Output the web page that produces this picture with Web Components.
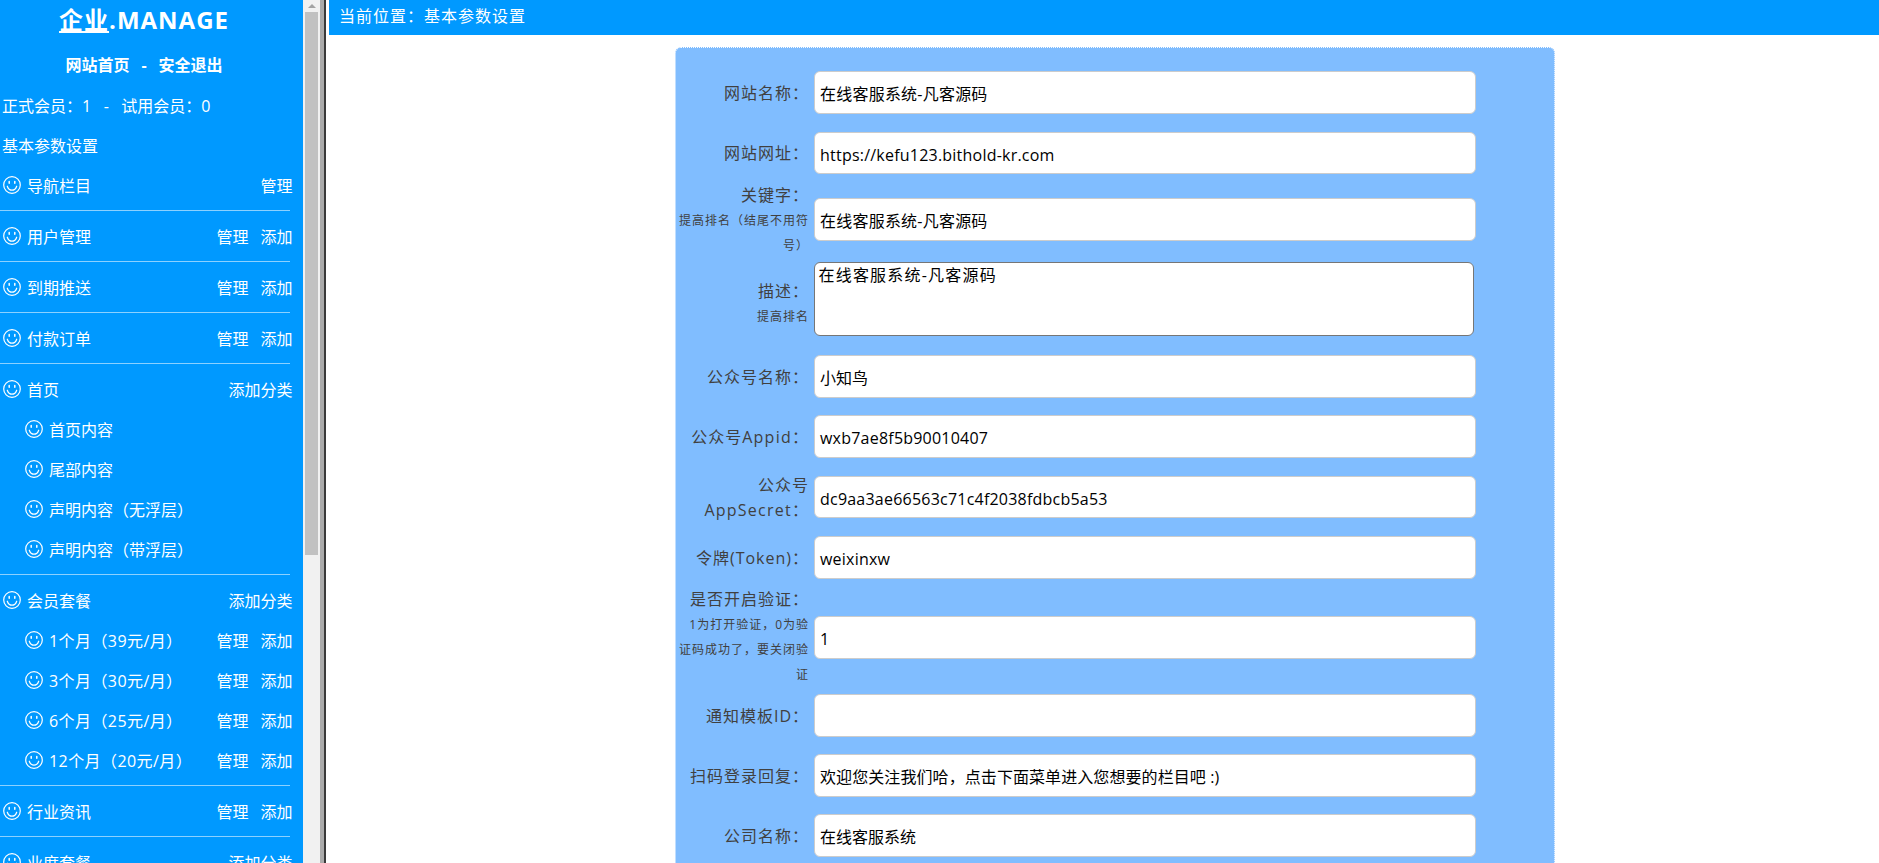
<!DOCTYPE html>
<html lang="zh"><head><meta charset="utf-8"><title>基本参数设置</title>
<style>
html,body{margin:0;height:863px;overflow:hidden;background:#fff}
body{font:16px/25px "Open Sans","Noto Sans CJK SC",sans-serif;display:flex}
.lat{letter-spacing:1.25px}
</style></head><body>
<app-sidebar>
  <side-title></side-title>
  <side-line center bold><span>网站首页</span><span style="margin:0 12px">-</span><span>安全退出</span></side-line>
  <side-line>正式会员：1<span style="margin:0 12.5px">-</span>试用会员：0</side-line>
  <side-line>基本参数设置</side-line>
  <nav-row actions="管理">导航栏目</nav-row><side-rule></side-rule>
  <nav-row actions="管理,添加">用户管理</nav-row><side-rule></side-rule>
  <nav-row actions="管理,添加">到期推送</nav-row><side-rule></side-rule>
  <nav-row actions="管理,添加">付款订单</nav-row><side-rule></side-rule>
  <nav-row actions="添加分类">首页</nav-row>
  <nav-row sub>首页内容</nav-row>
  <nav-row sub>尾部内容</nav-row>
  <nav-row sub>声明内容（无浮层）</nav-row>
  <nav-row sub>声明内容（带浮层）</nav-row><side-rule></side-rule>
  <nav-row actions="添加分类">会员套餐</nav-row>
  <nav-row sub track actions="管理,添加">1个月（39元/月）</nav-row>
  <nav-row sub track actions="管理,添加">3个月（30元/月）</nav-row>
  <nav-row sub track actions="管理,添加">6个月（25元/月）</nav-row>
  <nav-row sub track actions="管理,添加">12个月（20元/月）</nav-row><side-rule></side-rule>
  <nav-row actions="管理,添加">行业资讯</nav-row><side-rule></side-rule>
  <nav-row actions="添加分类">业度套餐</nav-row>
</app-sidebar>
<fake-scrollbar></fake-scrollbar>
<frame-edge></frame-edge>
<app-main>
  <top-bar>当前位置：基本参数设置</top-bar>
  <form-panel>
    <form-row track="l" value="在线客服系统-凡客源码">网站名称：</form-row>
    <form-row track="l" value="https://kefu123.bithold-kr.com">网站网址：</form-row>
    <form-row track="l" note value="在线客服系统-凡客源码">关键字：<small slot="note">提高排名（结尾不用符号）</small></form-row>
    <form-row note multiline value="在线客服系统-凡客源码">描述：<small slot="note">提高排名</small></form-row>
    <form-row value="小知鸟">公众号名称：</form-row>
    <form-row track="l" value="wxb7ae8f5b90010407">公众号<span class="lat">Appid</span>：</form-row>
    <form-row track="l" value="dc9aa3ae66563c71c4f2038fdbcb5a53">公众号<span class="lat">AppSecret</span>：</form-row>
    <form-row track="l" value="weixinxw">令牌(Token)：</form-row>
    <form-row note low value="1">是否开启验证：<small slot="note">1为打开验证，0为验证码成功了，要关闭验证</small></form-row>
    <form-row value="">通知模板ID：</form-row>
    <form-row track="s" value="欢迎您关注我们哈，点击下面菜单进入您想要的栏目吧 :)">扫码登录回复：</form-row>
    <form-row value="在线客服系统">公司名称：</form-row>
  </form-panel>
</app-main>
<script>
const SMILE=`<svg width="18" height="18" viewBox="0 0 18 18" fill="none" stroke="#fff" stroke-width="1.2" stroke-linecap="round"><circle cx="9" cy="9" r="8.3"/><path d="M4.3 10.2c.9 2.8 2.8 4 4.7 4s3.8-1.2 4.7-4"/><path d="M6.2 5.6v1.6M11.8 5.6v1.6" stroke-width="1.5"/></svg>`;
function def(name,css,html){
  customElements.define(name,class extends HTMLElement{
    connectedCallback(){
      if(this.shadowRoot)return;
      const r=this.attachShadow({mode:'open'});
      r.innerHTML=`<style>${css}</style>`+(typeof html==='function'?html(this):html);
    }
  });
}
def('app-sidebar',`:host{display:block;box-sizing:border-box;width:303px;height:863px;flex:none;background:#0099ff;color:#fff;overflow:hidden}`,`<slot></slot>`);
def('side-title',`:host{display:block;box-sizing:border-box;width:290px;height:46px;padding-right:2px;text-align:center;font-size:24px;font-weight:700;line-height:40px;letter-spacing:1px}
 a{color:inherit;text-decoration:underline}`,`<a href="#">企业</a>.MANAGE`);
def('side-line',`:host{display:block;box-sizing:border-box;width:292px;height:40px;line-height:40px;padding-left:2px;white-space:nowrap}
 :host([center]){text-align:center;padding:0 4px 0 0;line-height:38px}:host([bold]){font-weight:700}`,`<slot></slot>`);
def('side-rule',`:host{display:block;width:290px;height:1px;background:rgba(255,255,255,.55);margin:4px 0 6px}`,``);
def('nav-row',`:host{display:flex;align-items:center;box-sizing:border-box;width:292.5px;height:40px;padding-left:3px;white-space:nowrap;font-size:16px}
 :host([sub]){padding-left:25px}
 svg{flex:none;margin-right:6px;position:relative;top:-1px}
 .t{flex:1}:host([track]) .t{letter-spacing:.42px}.a{display:flex;gap:12px}`,
 el=>`${SMILE}<span class="t"><slot></slot></span><span class="a">${(el.getAttribute('actions')||'').split(',').filter(Boolean).map(x=>`<span>${x}</span>`).join('')}</span>`);
def('fake-scrollbar',`:host{display:flex;flex-direction:column;align-items:center;width:17px;height:863px;flex:none;background:#f1f1f1}
 .up{width:0;height:0;border:4px solid transparent;border-top:0;border-bottom:4px solid #a3a3a3;margin:4px 0 4px}
 .thumb{width:13px;height:543px;background:#c1c1c1}`,`<div class="up"></div><div class="thumb"></div>`);
def('frame-edge',`:host{display:block;box-sizing:border-box;width:6px;height:863px;flex:none;border-left:4px solid #ababab;background:#3a3a3a}`,``);
def('app-main',`:host{display:block;flex:1;min-width:0;height:863px;overflow:hidden;padding-left:3px;background:#fff}`,`<slot></slot>`);
def('top-bar',`:host{display:block;box-sizing:border-box;height:35px;line-height:32px;background:#0099ff;color:#fff;padding-left:10px;letter-spacing:1px}`,`<slot></slot>`);
def('form-panel',`:host{display:block;box-sizing:border-box;width:880px;margin:12px 0 0 346px;padding:14.7px 1px 15px 2px;background:#80bdff;border:1px dotted #fff;border-radius:6px;letter-spacing:1px}`,`<slot></slot>`);
def('form-row',`:host{display:flex;align-items:center;min-height:60.2px;color:#404040}
 .label{box-sizing:border-box;flex:none;width:131px;padding:1.5px 0 0 0;text-align:right;line-height:24.5px}
 :host([note]) .label{margin-bottom:-1.5px;padding-top:0}
 :host([multiline]) .label{padding-top:4px}
 .m{display:block}
 ::slotted(small){display:block;font-size:12px;line-height:25px;letter-spacing:1px}
 .field{box-sizing:border-box;flex:none;width:662px;height:42.8px;margin-left:5px;padding:0 5px;line-height:44px;background:#fff;border:1px solid #ccc;border-radius:6px;color:#000;letter-spacing:0;white-space:nowrap;overflow:hidden}
 :host([track="l"]) .field{letter-spacing:.22px}
 :host([track="s"]) .field{letter-spacing:.08px}
 :host([low]) .field{margin-top:2px}
 .area{box-sizing:border-box;flex:none;width:660px;height:74px;margin:5.9px 2px 10.6px 5px;padding:0 4px 0 3.5px;line-height:24px;background:#fff;border:1px solid #767676;border-radius:6px;color:#000;letter-spacing:1.2px}`,
 el=>{const v=el.getAttribute('value')||'';return `<div class="label"><span class="m"><slot></slot></span><slot name="note"></slot></div>`+(el.hasAttribute('multiline')?`<div class="area">${v}</div>`:`<div class="field">${v}</div>`)});
</script></body></html>
